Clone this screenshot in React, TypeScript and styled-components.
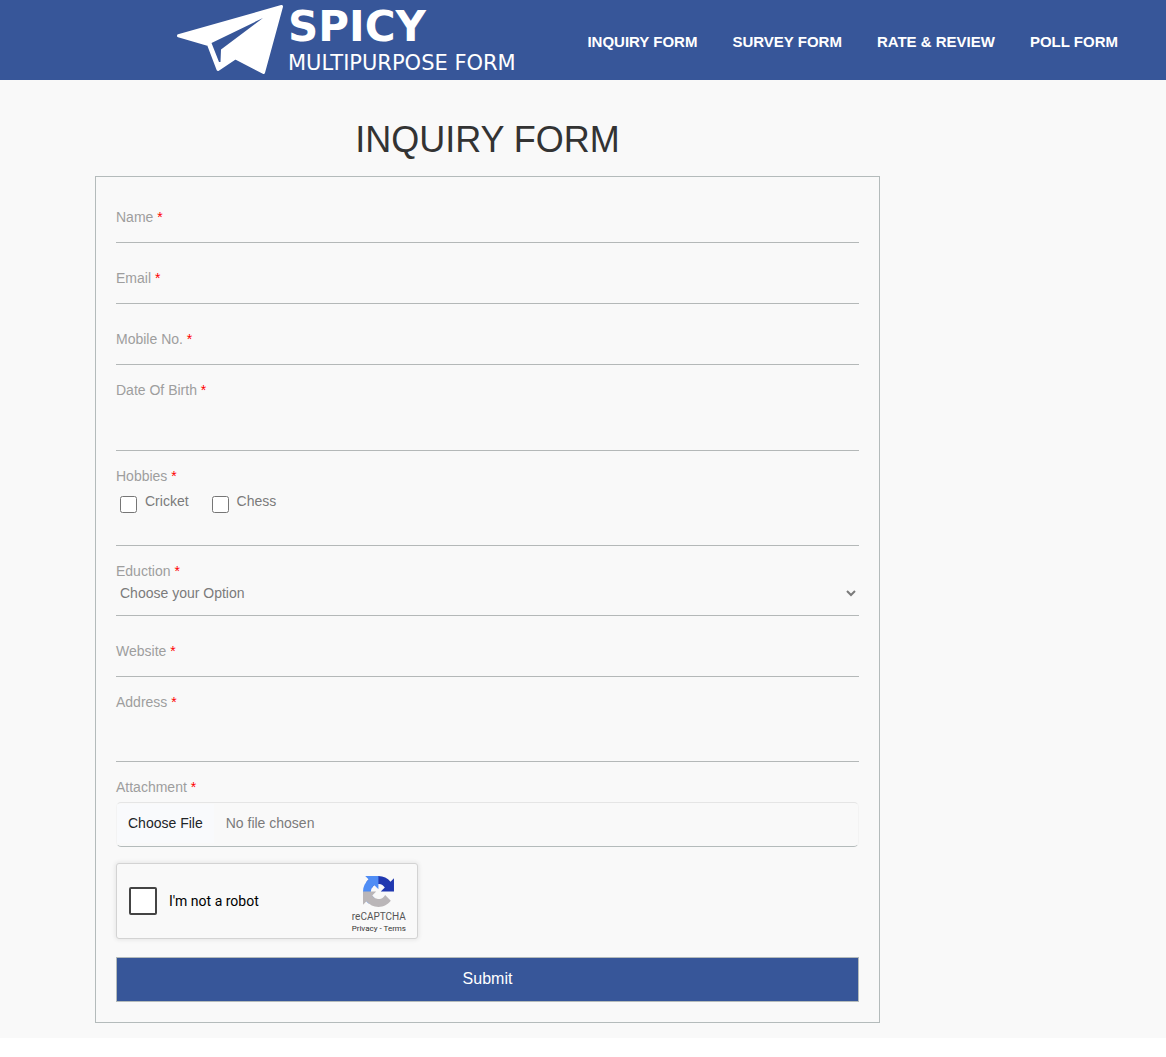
import React from "react";
import styled, { createGlobalStyle, css } from "styled-components";

const GlobalStyle = createGlobalStyle`
  *, *::before, *::after { box-sizing: border-box; }
  body {
    margin: 0;
    background: #fff;
    color: #333;
    font-family: "Liberation Sans", Arial, Helvetica, sans-serif;
    font-size: 14px;
    line-height: 20px;
  }
`;

const Header = styled.header`
  display: flex;
  align-items: center;
  justify-content: space-between;
  flex-wrap: wrap;
  min-height: 80px;
  padding: 0 48px 0 176px;
  background: #375699;
`;

const Brand = styled.a`
  display: flex;
  gap: 4px;
  color: #fff;
  text-decoration: none;
  font-family: "DejaVu Sans", Verdana, sans-serif;
`;

const Plane = styled.svg`
  width: 108px;
  height: 80px;
`;

const BrandText = styled.span`
  display: flex;
  flex-direction: column;
  padding-top: 2px;
`;

const BrandName = styled.span`
  font-size: 42px;
  font-weight: 700;
  line-height: 49px;
`;

const BrandLine = styled.span`
  font-size: 21px;
  line-height: 24px;
  white-space: nowrap;
`;

const Nav = styled.nav`
  display: flex;
  gap: 35px;
  padding-top: 4px;
`;

const NavLink = styled.a`
  color: #fff;
  font-size: 15px;
  font-weight: 700;
  text-decoration: none;
  white-space: nowrap;
`;

const Page = styled.main`
  padding: 40px 95px 15px;
  background: #f9f9f9;
`;

const Column = styled.div`
  max-width: 785px;
`;

const Title = styled.h1`
  margin: 0 0 16px;
  color: #333;
  font-size: 36px;
  font-weight: 400;
  line-height: 40px;
  text-align: center;
`;

const Form = styled.form`
  display: flex;
  flex-direction: column;
  gap: 15px;
  padding: 20px;
  border: 1px solid #b4bbbb;
`;

const labelText = css`
  color: #9e9e9e;
  font-size: 14px;
  line-height: 20px;
`;

const Label = styled.label`
  ${labelText}
  display: block;
`;

const Required = styled.span`
  color: #f00;
`;

const controlBase = css`
  display: block;
  width: 100%;
  margin: 0;
  padding: 0;
  border: 0;
  border-bottom: 1px solid #b4b8b8;
  border-radius: 0;
  outline: 0;
  background: transparent;
  color: #7b7b7b;
  font: inherit;
`;

const FloatingField = styled.div`
  display: grid;

  & > * {
    grid-area: 1 / 1;
  }

  & > label {
    align-self: start;
    justify-self: start;
    padding-top: 10px;
  }
`;

const FloatingInput = styled.input`
  ${controlBase}
  height: 46px;
`;

const Field = styled.div``;

const TallInput = styled.input`
  ${controlBase}
  height: 51px;
`;

const TextArea = styled.textarea`
  ${controlBase}
  height: 50px;
  resize: none;
`;

const Group = styled.fieldset`
  min-width: 0;
  margin: 0;
  padding: 0;
  border: 0;
  border-bottom: 1px solid #b4b8b8;
`;

const Legend = styled.legend`
  ${labelText}
  padding: 0;
`;

const Choices = styled.div`
  display: flex;
  gap: 23px;
  height: 59px;
  padding: 5px 4px;
`;

const Choice = styled.label`
  display: flex;
  align-items: flex-start;
  gap: 8px;
  color: #7b7b7b;
`;

const Check = styled.input`
  width: 17px;
  height: 17px;
  margin: 5px 0 0;
`;

const SelectBox = styled.div`
  display: grid;
  align-items: start;

  & > * {
    grid-area: 1 / 1;
  }

  & > svg {
    justify-self: end;
    margin: 8px 3px;
    pointer-events: none;
  }
`;

const Select = styled.select`
  ${controlBase}
  height: 35px;
  padding: 0 20px 10px 4px;
  appearance: none;
`;

const FileInput = styled.input`
  display: block;
  width: 100%;
  height: 45px;
  margin-top: 5px;
  padding: 10px 11px;
  border: 1px solid #f3f3f3;
  border-top-color: #e5e5e5;
  border-bottom-color: #b4bbbb;
  border-radius: 5px;
  color: #7b7b7b;
  font: inherit;

  &::file-selector-button {
    margin: -10px 12px -10px -11px;
    padding: 9px 11px 10px;
    border: 0;
    background: #f9fafc;
    color: #212529;
    font: inherit;
  }
`;

const Captcha = styled.div`
  display: flex;
  align-items: center;
  justify-content: space-between;
  width: 302px;
  height: 76px;
  max-width: 100%;
  margin: 1px 0 3px;
  padding: 0 11px 0 12px;
  border: 1px solid #d3d3d3;
  border-radius: 3px;
  background: #f9f9f9;
  box-shadow: 0 0 4px 1px rgba(0, 0, 0, 0.08);
  font-family: Roboto, sans-serif;
`;

const RobotLabel = styled.label`
  display: flex;
  align-items: center;
  gap: 12px;
  color: #000;
`;

const RobotCheck = styled.input`
  appearance: none;
  width: 28px;
  height: 28px;
  margin: 0;
  border: 2px solid #444;
  border-radius: 2px;
  background: #fff;

  &:checked {
    background: #4285f4;
  }
`;

const CaptchaBadge = styled.div`
  display: flex;
  flex-direction: column;
  align-items: center;
  padding-top: 8px;
  color: #555;
  font-size: 10px;
  line-height: 12px;

  & > svg {
    width: 31px;
    height: 31px;
    margin-bottom: 4px;
  }
`;

const CaptchaLinks = styled.span`
  color: #333;
  font-size: 8px;

  a {
    color: inherit;
    text-decoration: none;
  }
`;

const Submit = styled.button`
  height: 45px;
  padding: 0 0 2px;
  border: 1px solid #b4bbbb;
  background: #375699;
  color: #fff;
  font: inherit;
  font-size: 16px;
`;

const links = ["INQUIRY FORM", "SURVEY FORM", "RATE & REVIEW", "POLL FORM"];

function Star() {
  return <Required>*</Required>;
}

function Floating({ id, label, type = "text" }: { id: string; label: string; type?: string }) {
  return (
    <FloatingField>
      <FloatingInput id={id} name={id} type={type} />
      <Label htmlFor={id}>{label} <Star /></Label>
    </FloatingField>
  );
}

export default function App() {
  return (
    <>
      <GlobalStyle />
      <Header>
        <Brand href="#">
          <Plane viewBox="0 0 108 80" aria-hidden="true">
            <path
              d="M2.5 35.8 L105.5 6.5 L87.5 72.5 L59.5 57.8 L42 69.5 L32.5 44.5 Z"
              fill="#fff"
              stroke="#fff"
              strokeWidth="3"
              strokeLinejoin="round"
            />
            <path d="M35.5 43 L87 18 L45 49.5 L44.5 62 L43 62 Z" fill="#375699" />
          </Plane>
          <BrandText>
            <BrandName>SPICY</BrandName>
            <BrandLine>MULTIPURPOSE FORM</BrandLine>
          </BrandText>
        </Brand>
        <Nav>
          {links.map((text) => (
            <NavLink key={text} href="#">{text}</NavLink>
          ))}
        </Nav>
      </Header>
      <Page>
        <Column>
          <Title>INQUIRY FORM</Title>
          <Form onSubmit={(e) => e.preventDefault()}>
            <Floating id="name" label="Name" />
            <Floating id="email" label="Email" type="email" />
            <Floating id="mobile" label="Mobile No." type="tel" />
            <Field>
              <Label htmlFor="dob">Date Of Birth <Star /></Label>
              <TallInput id="dob" name="dob" type="text" />
            </Field>
            <Group>
              <Legend>Hobbies <Star /></Legend>
              <Choices>
                <Choice><Check type="checkbox" name="cricket" />Cricket</Choice>
                <Choice><Check type="checkbox" name="chess" />Chess</Choice>
              </Choices>
            </Group>
            <Field>
              <Label htmlFor="education">Eduction <Star /></Label>
              <SelectBox>
                <Select id="education" name="education">
                  <option>Choose your Option</option>
                </Select>
                <svg width="10" height="8" viewBox="0 0 10 8" aria-hidden="true">
                  <path d="M1 2 L5 6 L9 2" fill="none" stroke="#7b7b7b" strokeWidth="2" />
                </svg>
              </SelectBox>
            </Field>
            <Floating id="website" label="Website" type="url" />
            <Field>
              <Label htmlFor="address">Address <Star /></Label>
              <TextArea id="address" name="address" />
            </Field>
            <Field>
              <Label htmlFor="attachment">Attachment <Star /></Label>
              <FileInput id="attachment" name="attachment" type="file" />
            </Field>
            <Captcha>
              <RobotLabel>
                <RobotCheck type="checkbox" name="robot" />
                I'm not a robot
              </RobotLabel>
              <CaptchaBadge>
                <svg viewBox="0 0 64 64" aria-hidden="true">
                  <path fill="#2038b0" d="M64 31.955l-.033-1.37V4.687l-7.16 7.16C50.948 4.674 42.033.093 32.05.093c-10.4 0-19.622 4.96-25.458 12.64l11.736 11.86a15.55 15.55 0 0 1 4.754-5.334c2.05-1.6 4.952-2.906 8.968-2.906.485 0 .86.057 1.135.163 4.976.393 9.288 3.14 11.828 7.124l-8.307 8.307L64 31.953" />
                  <path fill="#4f8df5" d="M31.862.094l-1.37.033H4.594l7.16 7.16C4.58 13.147 0 22.06 0 32.046c0 10.4 4.96 19.622 12.64 25.458L24.5 45.768a15.55 15.55 0 0 1-5.334-4.754c-1.6-2.05-2.906-4.952-2.906-8.968 0-.485.057-.86.163-1.135.393-4.976 3.14-9.288 7.124-11.828l8.307 8.307L31.86.095" />
                  <path fill="#bab6b8" d="M.001 32.045l.033 1.37v25.898l7.16-7.16c5.86 7.173 14.774 11.754 24.76 11.754 10.4 0 19.622-4.96 25.458-12.64l-11.736-11.86a15.55 15.55 0 0 1-4.754 5.334c-2.05 1.6-4.952 2.906-8.968 2.906-.485 0-.86-.057-1.135-.163-4.976-.393-9.288-3.14-11.828-7.124l8.307-8.307c-10.522.04-22.4.066-27.295-.005" />
                </svg>
                <span>reCAPTCHA</span>
                <CaptchaLinks><a href="#">Privacy</a> - <a href="#">Terms</a></CaptchaLinks>
              </CaptchaBadge>
            </Captcha>
            <Submit type="submit">Submit</Submit>
          </Form>
        </Column>
      </Page>
    </>
  );
}
